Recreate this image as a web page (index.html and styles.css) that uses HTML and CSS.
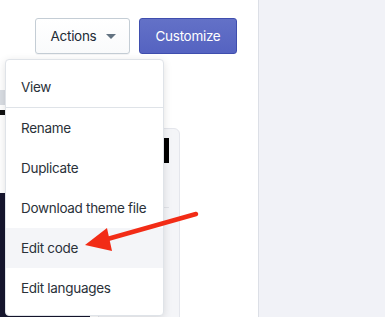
FILE: index.html
```html
<!DOCTYPE html>
<html lang="en">
<head>
  <meta charset="UTF-8" />
  <title>Themes - Actions</title>
  <link rel="stylesheet" href="styles.css">
</head>
<body>

  <div class="page">
    <section class="main">
      <div class="toolbar">
        <button class="btn btn-actions">Actions <span class="caret"></span></button>
        <button class="btn btn-primary">Customize</button>
      </div>

      <div class="previews">
        <div class="thumb thumb-left">
          <div class="strip gray"></div>
          <div class="strip black"></div>
          <div class="strip navy"></div>
        </div>
        <div class="thumb thumb-card">
          <div class="card-bar"></div>
          <div class="card-line"></div>
        </div>
      </div>

      <ul class="menu">
        <li class="menu-section first">
          <a class="menu-item">View</a>
        </li>
        <li class="menu-section last">
          <a class="menu-item">Rename</a>
          <a class="menu-item">Duplicate</a>
          <a class="menu-item">Download theme file</a>
          <a class="menu-item active">Edit code</a>
          <a class="menu-item">Edit languages</a>
        </li>
      </ul>

      <svg class="arrow" width="258" height="317" viewBox="0 0 258 317">
        <line x1="196" y1="214" x2="104" y2="240" stroke="#f22c16" stroke-width="4.5" stroke-linecap="round"/>
        <polygon points="85,245 107,228 112,251" fill="#f22c16"/>
      </svg>
    </section>

    <aside class="side"></aside>
  </div>

</body>
</html>
```

FILE: styles.css
```css
body {
  margin: 0;
  font-family: 'Inter', 'Noto Sans', sans-serif;
  color: #212b36;
  background-color: #f1f2f7;
}

.page {
  display: flex;
  height: 317px;
  overflow: hidden;
}

.main {
  position: relative;
  width: 258px;
  background-color: #fff;
  border-right: 1px solid #dcdfe6;
}

.side {
  flex: 1;
  background-color: #f1f2f7;
}

.toolbar {
  display: flex;
  justify-content: flex-end;
  gap: 9px;
  padding: 18px 21px 0 0;
}

.btn {
  height: 36px;
  padding: 0;
  border-radius: 3px;
  font-family: inherit;
  font-size: 13.5px;
  letter-spacing: -0.3px;
  cursor: pointer;
}

.btn-actions {
  width: 95px;
  background: linear-gradient(#fff, #f9fafb);
  border: 1px solid #c4cdd5;
  color: #212b36;
  display: flex;
  align-items: center;
  justify-content: center;
  gap: 10px;
  padding-left: 2px;
  box-shadow: 0 1px 0 rgba(22,29,37,0.05);
}

.caret {
  width: 0;
  height: 0;
  border-left: 5px solid transparent;
  border-right: 5px solid transparent;
  border-top: 5px solid #637381;
  margin-top: 1px;
}

.btn-primary {
  width: 98px;
  background: linear-gradient(#6371c7, #5563c1);
  border: 1px solid #3f4eae;
  color: #fff;
}

/* miniaturas do tema atras do menu */
.previews {
  display: flex;
  justify-content: space-between;
  margin-top: 36px;
}

.thumb-left {
  width: 90px;
  height: 240px;
  display: flex;
  flex-direction: column;
}

.strip.gray {
  height: 15px;
  background-color: #d9dde3;
}

.strip.black {
  height: 5px;
  margin-top: 5px;
  background-color: #111;
}

.strip.navy {
  height: 130px;
  margin-top: 78px;
  background-color: #16162e;
}

.thumb-card {
  width: 80px;
  height: 200px;
  margin: 38px 78px 0 0;
  background-color: #f4f5f8;
  border: 1px solid #e4e6ec;
  border-radius: 6px;
  padding-top: 9px;
}

.card-bar {
  height: 25px;
  margin-right: 10px;
  background-color: #000;
}

.card-line {
  height: 1px;
  margin: 44px 10px 0 0;
  background-color: #e1e3e8;
}

.menu {
  position: absolute;
  top: 59px;
  left: 5px;
  width: 157px;
  margin: 0;
  padding: 0;
  list-style: none;
  background-color: #fff;
  border: 1px solid #dfe3e8;
  border-radius: 4px;
  box-shadow: 0 2px 8px rgba(0,0,0,0.12);
}

.menu-section.first {
  padding-top: 7px;
}

.menu-section.last {
  padding-bottom: 7px;
  border-top: 1px solid #dfe3e8;
}

.menu-item {
  display: block;
  height: 40px;
  line-height: 40px;
  padding: 0 15px;
  font-size: 13.5px;
  letter-spacing: -0.3px;
  white-space: nowrap;
  color: #2a3139;
}

.menu-item.active {
  background-color: #f4f5f8;
}

.arrow {
  position: absolute;
  top: 0;
  left: 0;
}
```
